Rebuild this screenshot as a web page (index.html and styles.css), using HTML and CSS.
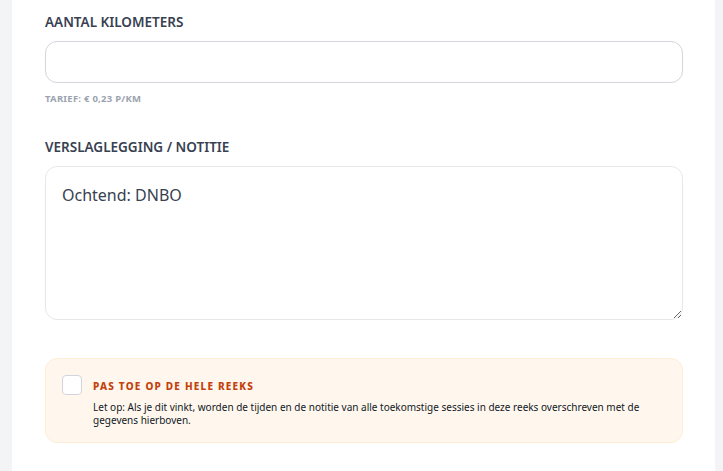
FILE: index.html
```html
<!DOCTYPE html>
<html lang="nl">
<head>
<meta charset="utf-8">
<link rel="stylesheet" href="styles.css">
</head>
<body>
<div class="card">
  <div class="field">
    <label class="label">AANTAL KILOMETERS</label>
    <input class="input" type="text">
    <div class="hint">TARIEF: € 0,23 P/KM</div>
  </div>
  <div class="field notes">
    <label class="label">VERSLAGLEGGING / NOTITIE</label>
    <textarea class="textarea">Ochtend: DNBO</textarea>
  </div>
  <div class="warn">
    <span class="check"></span>
    <div class="warn-body">
      <div class="warn-title">PAS TOE OP DE HELE REEKS</div>
      <div class="warn-text">Let op: Als je dit vinkt, worden de tijden en de notitie van alle toekomstige sessies in deze reeks overschreven met de gegevens hierboven.</div>
    </div>
  </div>
</div>
</body>
</html>
```
FILE: styles.css
```css
* { box-sizing: border-box; }
html, body { margin: 0; height: 100%; }
body {
  background: #f3f4f6;
  font-family: "Noto Sans", "Open Sans", sans-serif;
  color: #1f2937;
}
.card {
  background: #fff;
  margin: 0 8px 0 12px;
  min-height: 100%;
  padding: 12px 32px 0 33px;
}
.field { display: flex; flex-direction: column; }
.label {
  font-size: 13.5px;
  font-weight: 600;
  color: #374151;
  line-height: 20px;
  margin-bottom: 9px;
}
.input {
  height: 42px;
  border: 1px solid #d4d4dc;
  border-radius: 12px;
  font: inherit;
  outline: none;
}
.hint {
  margin-top: 9px;
  font-size: 9.5px;
  font-weight: 700;
  letter-spacing: 0.25px;
  color: #9ca3af;
  line-height: 14px;
}
.notes { margin-top: 31px; }
.textarea {
  height: 154px;
  border: 1px solid #e5e7eb;
  border-radius: 12px;
  padding: 17px 16px;
  font: inherit;
  font-size: 16px;
  color: #374151;
  resize: vertical;
  outline: none;
}
.warn {
  margin-top: 38px;
  display: flex;
  gap: 11px;
  background: #fff7ed;
  border: 1px solid #ffedd5;
  border-radius: 12px;
  padding: 16px 16px 15px 16px;
}
.check {
  flex: none;
  width: 20px;
  height: 20px;
  background: #fff;
  border: 1px solid #d1d5db;
  border-radius: 4px;
}
.warn-title {
  font-size: 10px;
  font-weight: 800;
  letter-spacing: 1.2px;
  color: #c2410c;
  line-height: 14px;
  margin-top: 4px;
}
.warn-text {
  margin-top: 8px;
  font-size: 10px;
  line-height: 13px;
  color: #111827;
}
```
